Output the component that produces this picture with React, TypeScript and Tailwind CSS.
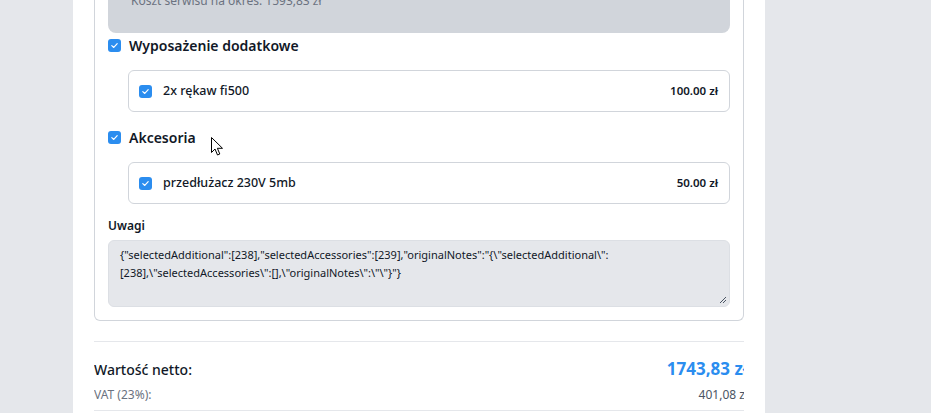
import React from "react";

const font = { fontFamily: '"Noto Sans", "Open Sans", sans-serif' };

const Check = () => (
  <div className="w-[13px] h-[13px] rounded-[3px] bg-[#2b8def] flex items-center justify-center shrink-0">
    <svg width="9" height="9" viewBox="0 0 10 10" fill="none">
      <path d="M2 5.2 L4.2 7.2 L8 3" stroke="white" strokeWidth="1.3" strokeLinecap="round" strokeLinejoin="round" />
    </svg>
  </div>
);

const ItemRow = ({ name, price }: { name: string; price: string }) => (
  <div className="ml-[20px] h-[42px] rounded-[6px] border border-[#d1d5db] flex items-center pl-[10px] pr-[11px]">
    <Check />
    <span className="ml-[11px] text-[12.5px] font-medium text-[#111827]">{name}</span>
    <span className="ml-auto text-[11.5px] font-semibold text-[#111827]">{price}</span>
  </div>
);

const Section = ({ title }: { title: string }) => (
  <div className="h-[20px] flex items-center">
    <Check />
    <span className="ml-[8px] text-[14px] font-semibold text-[#111827]">{title}</span>
  </div>
);

export default function App() {
  return (
    <div className="relative h-[413px] overflow-hidden bg-[#e5e7eb] flex" style={font}>
      <div className="w-[73px] shrink-0" />
      <div className="w-[692px] shrink-0 bg-white px-[21px]">
        <div className="overflow-hidden">
          <div className="mt-[-40px] border-x border-b border-[#d1d5db] rounded-b-[6px] px-[13px] pb-[13px]">
            <div className="h-[73px] bg-[#d1d5db] rounded-b-[8px] pl-[23px] pt-[32px] text-[12px] text-[#6b7280]">
              Koszt serwisu na okres: 1593,83 zł
            </div>
            <div className="mt-[2px]">
              <Section title="Wyposażenie dodatkowe" />
            </div>
            <div className="mt-[15px]">
              <ItemRow name="2x rękaw fi500" price="100.00 zł" />
            </div>
            <div className="mt-[15px]">
              <Section title="Akcesoria" />
            </div>
            <div className="mt-[15px]">
              <ItemRow name="przedłużacz 230V 5mb" price="50.00 zł" />
            </div>
            <div className="mt-[14px] h-[16px] leading-[16px] text-[12px] font-semibold text-[#111827]">Uwagi</div>
            <div className="mt-[6px] relative h-[67px] rounded-[6px] border border-[#dcdfe4] bg-[#e5e7eb] px-[11px] pt-[5px] text-[11px] leading-[18px] text-[#111827] break-words">
              {'{"selectedAdditional":[238],"selectedAccessories":[239],"originalNotes":"{\\"selectedAdditional\\":[238],\\"selectedAccessories\\":[],\\"originalNotes\\":\\"\\"}"}'}
              <svg className="absolute right-[2px] bottom-[2px]" width="9" height="9" viewBox="0 0 9 9">
                <path d="M8 2 L2 8 M8 5 L5 8" stroke="#4b5563" strokeWidth="1" />
              </svg>
            </div>
          </div>
          <div className="mt-[20px] h-px bg-[#e5e7eb]" />
          <div className="mt-[16px] h-[22px] flex items-center justify-between mr-[-4px]">
            <span className="text-[14px] font-medium text-[#111827]">Wartość netto:</span>
            <span className="text-[17px] font-bold text-[#2b8def]">1743,83 zł</span>
          </div>
          <div className="mt-[7px] h-[16px] flex items-center justify-between mr-[-4px] text-[12px] text-[#6b7280]">
            <span>VAT (23%):</span>
            <span className="text-[#4b5563]">401,08 zł</span>
          </div>
          <div className="mt-[7px] h-px bg-[#e5e7eb]" />
        </div>
      </div>
      <svg className="absolute left-[211px] top-[137px]" width="13" height="20" viewBox="0 0 13 20">
        <path d="M0.5 0.5 L0.5 15.5 L4 12 L6.5 18 L8.8 17 L6.4 11.3 L11.5 11.3 Z" fill="white" stroke="black" strokeWidth="1" strokeLinejoin="miter" />
      </svg>
    </div>
  );
}
